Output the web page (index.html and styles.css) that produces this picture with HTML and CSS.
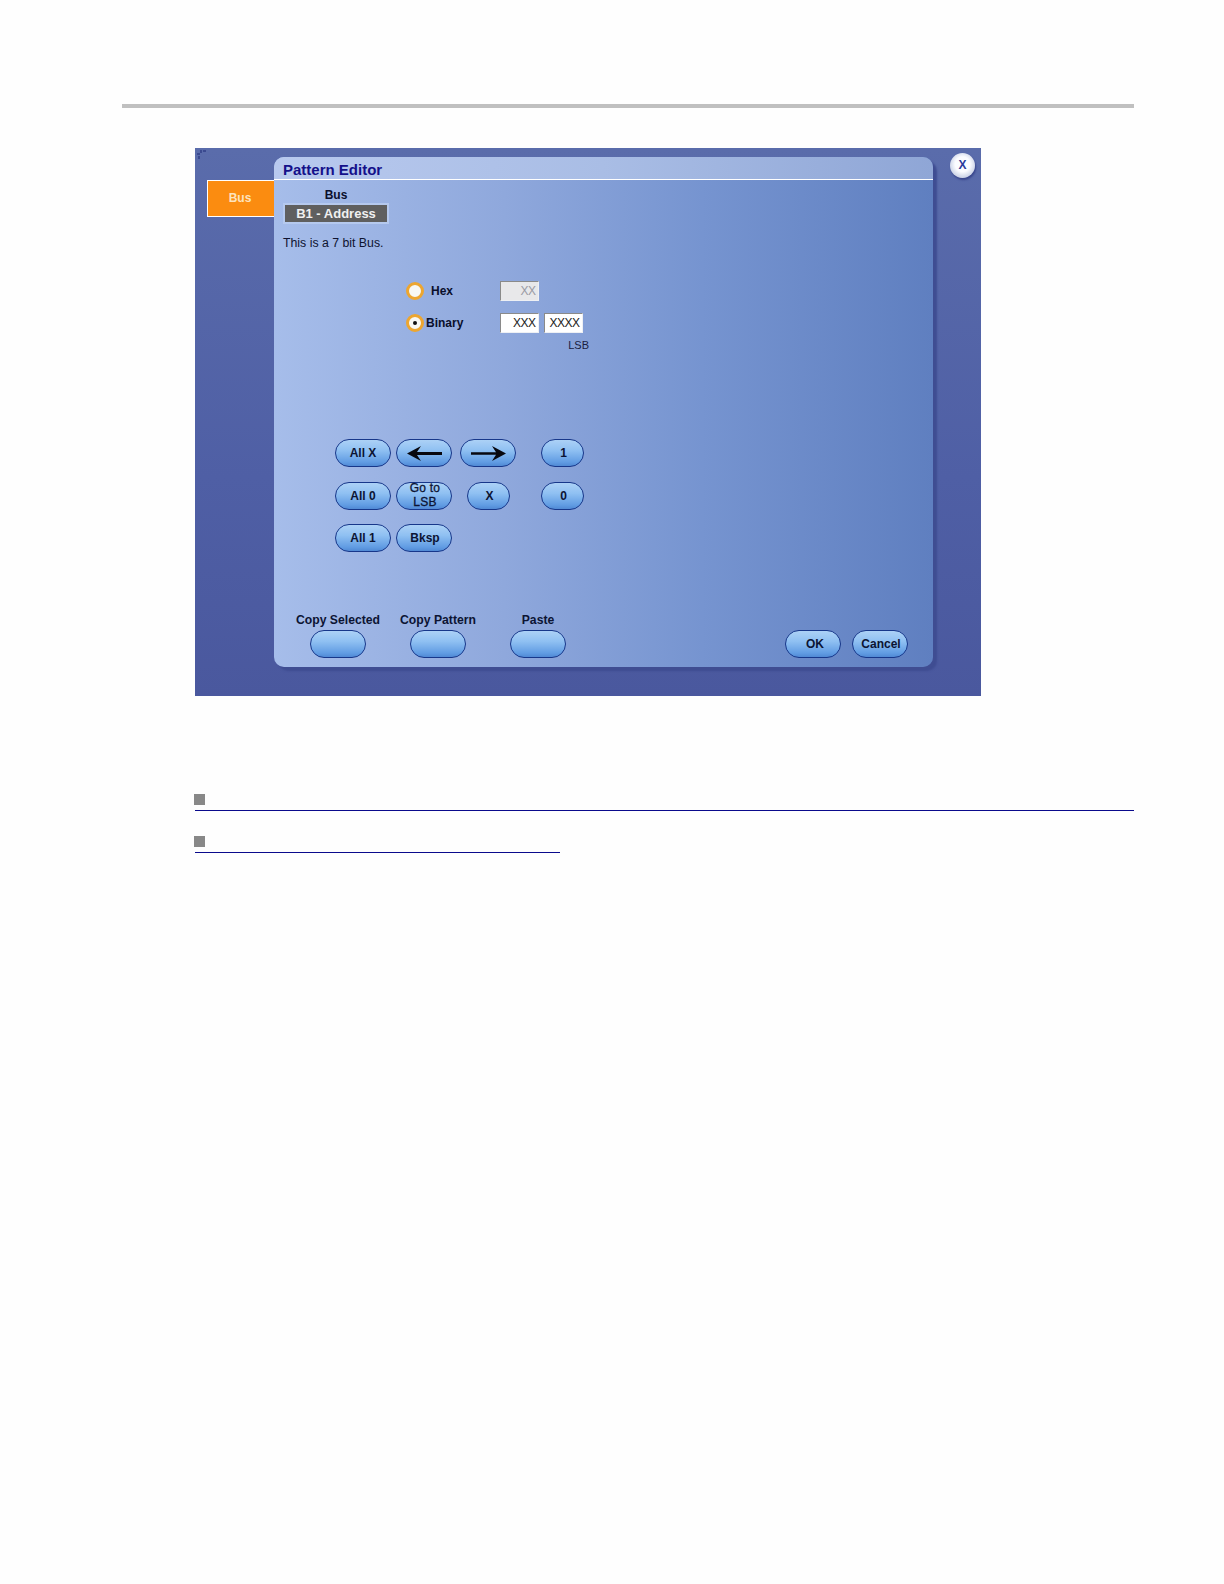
FILE: index.html
```html
<!DOCTYPE html>
<html>
<head>
  <title>Pattern Editor</title>
  <link rel="stylesheet" href="styles.css">
</head>
<body>
  <div class="top-rule"></div>

  <div class="shot">
    <svg class="grip" width="10" height="10" viewBox="0 0 10 10">
      <path d="M3 0h2v3H3zM6 0h3v2H6zM0 3h3v2H0zM1 6h2v3H1z" fill="#3b4a90"/>
    </svg>
    <div class="side-tab">Bus</div>

    <div class="panel">
      <div class="panel-title">Pattern Editor</div>

      <div class="bus-field">
        <div class="bus-label">Bus</div>
        <div class="bus-select">B1 - Address</div>
      </div>
      <div class="bus-note">This is a 7 bit Bus.</div>

      <div class="format-rows">
        <div class="format-row">
          <span class="radio"></span>
          <span class="format-label hex">Hex</span>
          <span class="field field-off">XX</span>
        </div>
        <div class="format-row">
          <span class="radio radio-on"></span>
          <span class="format-label">Binary</span>
          <span class="field">XXX</span>
          <span class="field">XXXX</span>
        </div>
      </div>
      <div class="lsb">LSB</div>

      <div class="keypad">
        <button class="btn">All X</button>
        <button class="btn">
          <svg width="37" height="15" viewBox="0 0 37 15">
            <path d="M1 7.500 15 0 11 6H36V9H11L15 15Z" fill="#08080f"/>
          </svg>
        </button>
        <button class="btn">
          <svg width="37" height="15" viewBox="0 0 37 15">
            <path d="M36 7.500 22 0 26 6.300H1V8.700H26L22 15Z" fill="#08080f"/>
          </svg>
        </button>
        <button class="btn btn-small btn-nudge">1</button>

        <button class="btn">All 0</button>
        <button class="btn btn-tight">Go to<br>LSB</button>
        <button class="btn btn-small btn-mid btn-nudge">X</button>
        <button class="btn btn-small btn-nudge">0</button>

        <button class="btn">All 1</button>
        <button class="btn btn-nudge">Bksp</button>
      </div>

      <div class="bottom-bar">
        <div class="copy-group">
          <div class="copy-item">
            <div class="copy-label">Copy Selected</div>
            <button class="btn"></button>
          </div>
          <div class="copy-item">
            <div class="copy-label">Copy Pattern</div>
            <button class="btn"></button>
          </div>
          <div class="copy-item">
            <div class="copy-label">Paste</div>
            <button class="btn"></button>
          </div>
        </div>
        <div class="actions">
          <button class="btn btn-ok">OK</button>
          <button class="btn btn-nudge">Cancel</button>
        </div>
      </div>
    </div>

    <div class="close-btn">X</div>
  </div>

  <div class="links">
    <div class="link-item">
      <span class="bullet"></span>
      <div class="link-line"></div>
    </div>
    <div class="link-item link-short">
      <span class="bullet"></span>
      <div class="link-line"></div>
    </div>
  </div>
</body>
</html>
```

FILE: styles.css
```css
body {
  margin: 0;
  background: #fefefe;
  font-family: "Liberation Sans", Arial, sans-serif;
  padding-top: 104px;
  min-height: 1480px;
}

.top-rule {
  width: 1012px;
  height: 4px;
  margin-left: 122px;
  background: #c0c0c0;
}

/* the scope window */
.shot {
  position: relative;
  display: flex;
  align-items: flex-start;
  box-sizing: border-box;
  width: 786px;
  height: 548px;
  margin: 40px 0 0 195px;
  padding: 9px 0 0 12px;
  background: linear-gradient(180deg, #5a6cab, #4f5fa5 60%, #4a589e);
}

.grip {
  position: absolute;
  top: 2px;
  left: 2px;
}

.side-tab {
  box-sizing: border-box;
  width: 67px;
  height: 37px;
  margin-top: 23px;
  padding-right: 2px;
  border: 1px solid #fff;
  border-right: 0;
  background: #fb8c10;
  color: #fde3bd;
  font-size: 12px;
  font-weight: bold;
  line-height: 35px;
  text-align: center;
}

.panel {
  box-sizing: border-box;
  width: 659px;
  height: 510px;
  border-radius: 10px;
  background: linear-gradient(90deg, #a6bdea, #8fa8dc 35%, #7694d0 65%, #5f7fc0);
  box-shadow: 4px 4px 2px #3f4d92;
}

.panel-title {
  box-sizing: border-box;
  height: 23px;
  padding-left: 9px;
  border-bottom: 1px solid #fff;
  border-radius: 10px 10px 0 0;
  background: linear-gradient(90deg, #b8c9ee, #a9bde5 50%, #8fa6d6);
  color: #14108a;
  font-size: 15px;
  font-weight: bold;
  line-height: 25px;
}

.bus-field {
  width: 106px;
  margin: 8px 0 0 9px;
}

.bus-label {
  color: #0a0f2c;
  font-size: 12px;
  font-weight: bold;
  line-height: 14px;
  text-align: center;
}

.bus-select {
  box-sizing: border-box;
  height: 21px;
  margin-top: 1px;
  border: 2px solid #b5c9ee;
  background: #5f5f5f;
  color: #f0f0f0;
  font-size: 13px;
  font-weight: bold;
  line-height: 17px;
  text-align: center;
}

.bus-note {
  margin: 12px 0 0 9px;
  color: #0e1330;
  font-size: 12.3px;
  line-height: 14px;
}

.format-rows {
  display: flex;
  flex-direction: column;
  gap: 12px;
  margin: 31px 0 0 132px;
}

.format-row {
  display: flex;
  align-items: center;
  height: 20px;
}

.radio {
  box-sizing: border-box;
  display: flex;
  align-items: center;
  justify-content: center;
  width: 18px;
  height: 18px;
  border: 3px solid #eda630;
  border-radius: 50%;
  background: #f8f8f4;
}

.radio-on::after {
  content: "";
  width: 4px;
  height: 4px;
  border-radius: 50%;
  background: #111;
}

.format-label {
  box-sizing: border-box;
  width: 76px;
  padding-left: 2px;
  color: #0a0f2c;
  font-size: 12px;
  font-weight: bold;
}

.format-label.hex {
  padding-left: 7px;
}

.field {
  box-sizing: border-box;
  width: 38.5px;
  height: 20px;
  margin-right: 5.5px;
  padding-right: 2px;
  border: 1px solid #eef0f4;
  border-top-color: #8a8a8a;
  border-left-color: #8a8a8a;
  background: #fff;
  color: #222;
  font-size: 12px;
  line-height: 19px;
  letter-spacing: -0.5px;
  text-align: right;
}

.field-off {
  background: #e8e8ea;
  color: #9a9aa4;
}

.lsb {
  width: 315px;
  margin-top: 5px;
  color: #1a2040;
  font-size: 11px;
  line-height: 14px;
  text-align: right;
}

.keypad {
  display: grid;
  grid-template-columns: 61px 64px 81px 43px;
  grid-auto-rows: 28px;
  row-gap: 14.5px;
  margin: 87px 0 0 61px;
}

.btn {
  box-sizing: border-box;
  display: flex;
  align-items: center;
  justify-content: center;
  width: 56px;
  height: 28px;
  padding: 0;
  border: 1.5px solid #17378a;
  border-radius: 14px;
  background: linear-gradient(180deg, #acd1f6, #8fc0f2 40%, #619ce3 85%, #5089d4);
  color: #0c1433;
  font-family: "Liberation Sans", Arial, sans-serif;
  font-size: 12px;
  font-weight: bold;
  line-height: 14px;
}

.btn-tight {
  padding: 0 0 2px 2px;
  font-weight: normal;
  letter-spacing: 0.2px;
  -webkit-text-stroke: 0.3px #0c1433;
}

.btn-small {
  width: 43px;
}

.btn-mid {
  margin-left: 7px;
}

.btn-nudge {
  padding-left: 2px;
}

.btn-ok {
  padding-left: 4px;
}

.bottom-bar {
  display: flex;
  align-items: flex-end;
  justify-content: space-between;
  margin-top: 60px;
  padding: 0 25px 0 14px;
}

.copy-group {
  display: flex;
}

.copy-item {
  display: flex;
  flex-direction: column;
  align-items: center;
  gap: 2px;
  width: 100px;
}

.copy-label {
  color: #0c1433;
  font-size: 12.2px;
  font-weight: bold;
  line-height: 16px;
  white-space: nowrap;
}

.actions {
  display: flex;
  gap: 11px;
}

.close-btn {
  box-sizing: border-box;
  width: 25px;
  height: 25px;
  margin: -4px 0 0 17px;
  border-radius: 50%;
  background: radial-gradient(circle at 50% 45%, #fbfcff 40%, #d9dfee 62%, #aab2d0 100%);
  box-shadow: 1px 2px 2px #39468c;
  color: #2a3a9c;
  font-size: 12px;
  font-weight: bold;
  line-height: 25px;
  text-align: center;
}

/* empty link lines under the picture */
.links {
  display: flex;
  flex-direction: column;
  gap: 25.5px;
  margin: 98px 0 0 194px;
}

.link-item {
  width: 940px;
}

.link-short {
  width: 366px;
}

.bullet {
  display: block;
  width: 11px;
  height: 11px;
  background: #888;
}

.link-line {
  height: 1px;
  margin: 4.5px 0 0 1px;
  background: #0a0a8c;
}
```
